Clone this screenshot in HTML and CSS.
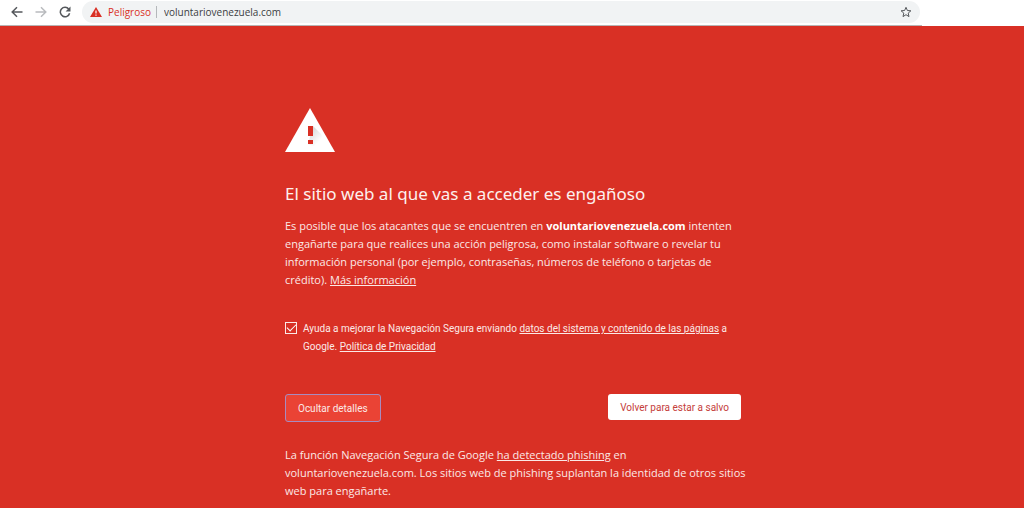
FILE: index.html
```
<!DOCTYPE html>
<html lang="es">
<head>
<meta charset="utf-8">
<meta name="viewport" content="width=device-width, initial-scale=1">
<title>Error de seguridad</title>
<link rel="stylesheet" href="styles.css">
</head>
<body>
<header class="toolbar">
  <div class="toolbar-main">
    <button class="nav-button" type="button" aria-label="Atrás">
      <svg width="12" height="12" viewBox="0 0 12 12"><path d="M11.500 6H1.500M6 1.200 1.200 6 6 10.800"/></svg>
    </button>
    <button class="nav-button" type="button" aria-label="Adelante" disabled>
      <svg width="12" height="12" viewBox="0 0 12 12"><path d="M.5 6h10M6 1.200 10.800 6 6 10.800"/></svg>
    </button>
    <button class="nav-button" type="button" aria-label="Recargar">
      <svg width="12" height="12" viewBox="0 0 12 12"><path d="M9.800 3.200A4.700 4.700 0 1 0 10.600 7.200"/><path class="solid" d="M11.500.5v4.900H6.600z"/></svg>
    </button>
    <div class="omnibox">
      <svg class="danger-icon" width="12" height="10" viewBox="0 0 12 10"><path fill="#d93025" d="M6 0 12 10H0z"/><path fill="#fff" d="M5.400 3.500h1.200v3H5.400zM5.400 7.500h1.200v1.200H5.400z"/></svg>
      <span class="danger-label">Peligroso</span>
      <input class="address" type="text" value="voluntariovenezuela.com" aria-label="Dirección">
      <button class="star-button" type="button" aria-label="Añadir a marcadores">
        <svg width="12" height="12" viewBox="0 0 12 12"><path d="m6 1.300 1.400 3.200 3.500.3-2.700 2.300.8 3.500L6 8.700l-3 1.900.8-3.500L1.100 4.800l3.500-.3z"/></svg>
      </button>
    </div>
  </div>
</header>
<main class="warning">
  <div class="content">
    <svg class="warning-icon" width="50" height="44" viewBox="0 0 50 44">
      <defs><linearGradient id="shade" x1="0" y1="0" x2="1" y2="1"><stop offset="0" stop-color="#ccc"/><stop offset=".6" stop-color="#fff"/></linearGradient></defs>
      <path fill="#fff" d="M25 0 50 44H0z"/>
      <path fill="url(#shade)" d="m28 18 8 8 8 15h-8l-13-5z"/>
      <path fill="#d93025" d="M23 18h5v10h-5zM23 32h5v4h-5z"/>
    </svg>
    <h1 class="title">El sitio web al que vas a acceder es engañoso</h1>
    <p class="text">Es posible que los atacantes que se encuentren en <strong>voluntariovenezuela.com</strong> intenten engañarte para que realices una acción peligrosa, como instalar software o revelar tu información personal (por ejemplo, contraseñas, números de teléfono o tarjetas de crédito). <a href="#">Más información</a></p>
    <div class="consent">
      <input class="checkbox" type="checkbox" id="report" checked>
      <label class="consent-label" for="report">Ayuda a mejorar la Navegación Segura enviando <a href="#">datos del sistema y contenido de las páginas</a> a Google. <a href="#">Política de Privacidad</a></label>
    </div>
    <div class="actions">
      <button class="button details-button" type="button">Ocultar detalles</button>
      <button class="button safe-button" type="button">Volver para estar a salvo</button>
    </div>
    <p class="text details">La función Navegación Segura de Google <a href="#">ha detectado phishing</a> en voluntariovenezuela.com. Los sitios web de phishing suplantan la identidad de otros sitios web para engañarte.</p>
  </div>
</main>
</body>
</html>
```
FILE: styles.css
```
* { box-sizing: border-box; }

body {
  display: flex;
  flex-direction: column;
  min-height: 100vh;
  margin: 0;
  background: #d93025;
  font-family: "Open Sans", "Noto Sans", sans-serif;
  font-size: 11px;
}

a { color: inherit; text-underline-offset: 1px; }

.toolbar { background: #fff; }

.toolbar-main {
  display: flex;
  align-items: center;
  width: 90%;
  padding: 1px 2px 2px 5px;
  border-bottom: 1px solid #b8b4b4;
}

.nav-button,
.star-button {
  display: flex;
  align-items: center;
  justify-content: center;
  width: 24px;
  height: 22px;
  padding: 0;
  border: 0;
  background: none;
  color: #55585c;
}

.nav-button:disabled { color: #b9bbbe; }

.nav-button svg,
.star-button svg {
  fill: none;
  stroke: currentColor;
  stroke-width: 1.5;
}

.star-button svg { stroke-width: 1; }

.nav-button .solid { fill: currentColor; stroke: none; }

.omnibox {
  display: flex;
  flex: 1;
  align-items: center;
  height: 22px;
  margin-left: 5px;
  padding: 0 2px 0 8px;
  border-radius: 11px;
  background: #f1f3f4;
}

.danger-label {
  margin-left: 6px;
  padding-right: 5px;
  border-right: 1px solid #b5b8bb;
  color: #d93025;
  font-size: 10px;
  line-height: 12px;
}

.address {
  flex: 1;
  min-width: 0;
  padding: 0 0 0 7px;
  border: 0;
  outline: 0;
  background: none;
  color: #3c4043;
  font: inherit;
  font-size: 10px;
  line-height: 12px;
}

.warning {
  flex: 1;
  padding: 82px 15px 0 17px;
  color: #fbe9e7;
}

.content {
  max-width: 456px;
  margin: 0 auto;
}

.warning-icon { display: block; }

.title {
  margin: 29px 0 10px;
  color: #fdf0ee;
  font-family: "Noto Sans", sans-serif;
  font-size: 17px;
  font-weight: 400;
  line-height: 26px;
}

.text {
  margin: 0;
  line-height: 18px;
}

.text strong { color: #fff; }

.details { margin-right: -12px; }

.consent {
  display: flex;
  align-items: flex-start;
  gap: 6px;
  margin: 31px 0 38px;
}

.checkbox {
  display: flex;
  flex: none;
  align-items: center;
  justify-content: center;
  width: 12px;
  height: 12px;
  margin: 2px 0 0;
  border: 1px solid #fbe9e7;
  appearance: none;
}

.checkbox:checked::before {
  width: 8px;
  height: 4px;
  margin-bottom: 3px;
  border: solid #fff;
  border-width: 0 0 1px 1px;
  content: "";
  transform: rotate(-45deg);
}

.consent-label {
  font-family: Roboto, sans-serif;
  font-size: 10px;
  line-height: 18px;
}

.actions {
  display: flex;
  flex-wrap: wrap;
  align-items: flex-start;
  justify-content: space-between;
  gap: 8px;
  margin-bottom: 24px;
}

.button {
  height: 26px;
  padding: 0 12px;
  border: 0;
  border-radius: 3px;
  font-family: Roboto, sans-serif;
  font-size: 10px;
}

.details-button {
  height: 28px;
  border: 1px solid #a78bc0;
  background: #ea4335;
  color: #fbe9e7;
}

.safe-button {
  background: #fff;
  color: #c5403a;
}
```
